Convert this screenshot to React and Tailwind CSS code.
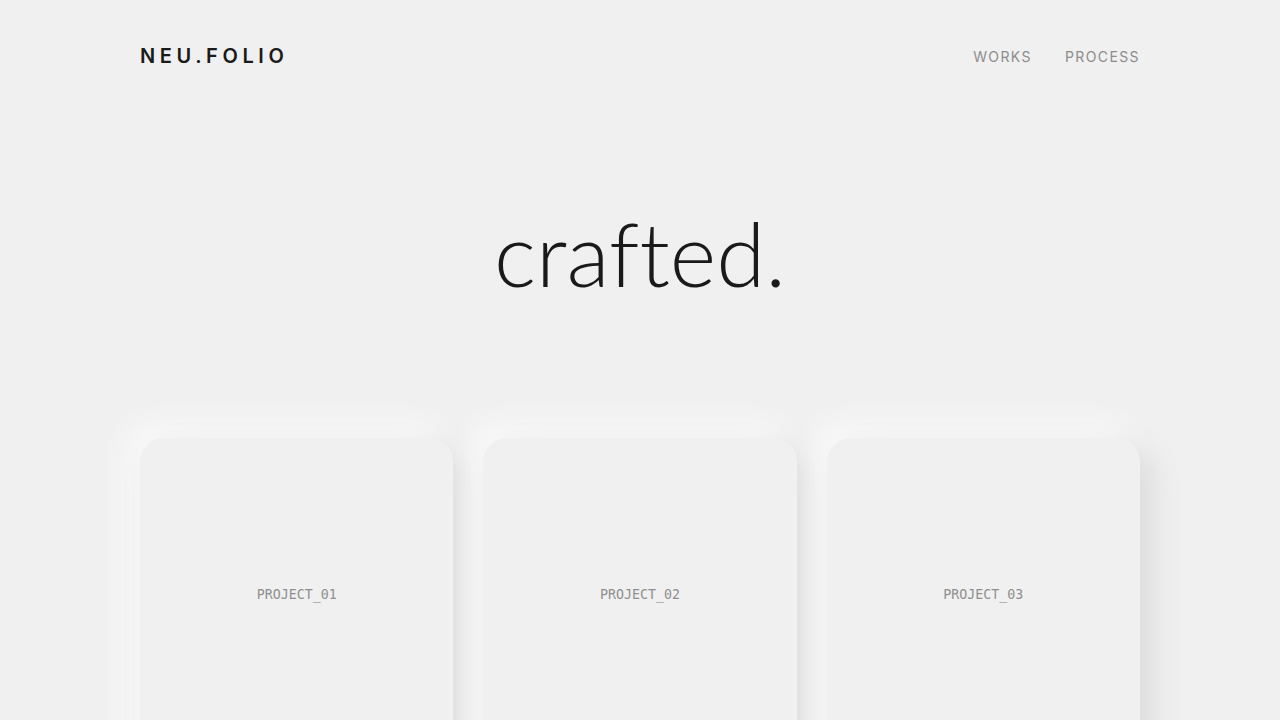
export default function App() {
  const cards = ["PROJECT_01", "PROJECT_02", "PROJECT_03"];
  return (
    <div className="min-h-screen w-full bg-[#f0f0f0] overflow-hidden" style={{ height: 720 }}>
      <div className="mx-auto w-[1000px]">
        <header className="flex items-center justify-between pt-[38px] h-[74px]">
          <div className="text-[20px] font-semibold tracking-[0.23em] text-[#1a1a1a]" style={{ fontFamily: "Inter, 'Noto Sans', sans-serif" }}>
            NEU.FOLIO
          </div>
          <nav className="flex gap-[33px] text-[14px] tracking-[0.1em] text-[#8c8c8c]" style={{ fontFamily: "Inter, 'Noto Sans', sans-serif" }}>
            <span>WORKS</span>
            <span>PROCESS</span>
          </nav>
        </header>
        <section className="flex justify-center pt-[134px]">
          <h1 className="text-[89px] font-light leading-none text-[#1a1a1a] [font-variant-ligatures:none]" style={{ fontFamily: "Lato, 'Noto Sans', sans-serif" }}>
            crafted.
          </h1>
        </section>
        <section className="grid grid-cols-3 gap-[30px] pt-[141px]">
          {cards.map((c) => (
            <div
              key={c}
              className="h-[420px] rounded-[24px] bg-[#f0f0f0] shadow-[12px_12px_30px_#dadada,-12px_-12px_30px_#fbfbfb] flex justify-center pt-[148px]"
            >
              <span className="text-[13.3px] leading-[18px] text-[#8f8f8f]" style={{ fontFamily: "'DejaVu Sans Mono', monospace" }}>{c}</span>
            </div>
          ))}
        </section>
      </div>
    </div>
  );
}
